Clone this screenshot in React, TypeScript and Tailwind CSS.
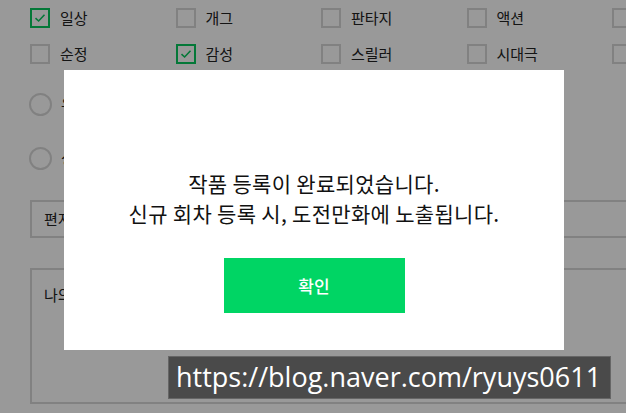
const genres = [
  [
    { label: "일상", checked: true },
    { label: "개그", checked: false },
    { label: "판타지", checked: false },
    { label: "액션", checked: false },
    { label: "", checked: false },
  ],
  [
    { label: "순정", checked: false },
    { label: "감성", checked: true },
    { label: "스릴러", checked: false },
    { label: "시대극", checked: false },
    { label: "", checked: false },
  ],
];

function CheckBox({ checked }: { checked: boolean }) {
  return (
    <span
      className={`w-[20px] h-[20px] shrink-0 border-2 flex items-center justify-center ${
        checked ? "border-[#07c85e]" : "border-[#d8d8d8]"
      }`}
    >
      {checked && (
        <svg width="12" height="10" viewBox="0 0 12 10" fill="none">
          <path d="M1.5 5.2 L4.6 8 L10.5 1.8" stroke="#07c85e" strokeWidth="1.6" />
        </svg>
      )}
    </span>
  );
}

export default function App() {
  return (
    <div
      className="relative w-[626px] h-[413px] overflow-hidden bg-white text-[#222]"
      style={{ fontFamily: '"Noto Sans CJK KR", "Noto Sans", sans-serif' }}
    >
      <div className="pl-[30px] pt-[8px] w-[680px]">
        <div className="flex flex-col gap-[16px]">
          {genres.map((row, i) => (
            <div key={i} className="flex">
              {row.map((g, j) => (
                <label key={j} className="w-[145.5px] shrink-0 flex items-center gap-[10px] text-[15px] leading-[20px]">
                  <CheckBox checked={g.checked} />
                  {g.label}
                </label>
              ))}
            </div>
          ))}
        </div>

        <div className="mt-[29px] flex flex-col gap-[31px]">
          {["유료", "성인"].map((t) => (
            <div key={t} className="flex items-center gap-[9px] text-[15px]">
              <span className="w-[23px] h-[23px] -ml-[1px] rounded-full border-2 border-[#d8d8d8]" />
              {t}
            </div>
          ))}
        </div>

        <div className="mt-[30px] h-[38px] border-2 border-[#d8d8d8] flex items-center px-[12px] text-[15px]">
          편지를
        </div>

        <div className="mt-[30px] h-[136px] border-2 border-[#d8d8d8] px-[12px] pt-[14px] text-[15px]">
          나의 작품 소개를 입력하세요
        </div>
      </div>

      <div className="absolute inset-0 bg-black/40" />

      <div className="absolute left-[64px] top-[70px] w-[500px] h-[280px] bg-white flex flex-col items-center pt-[98px]">
        <p className="text-[21px] leading-[30px] tracking-[0.3px] text-[#111] text-center">
          작품 등록이 완료되었습니다.
          <br />
          신규 회차 등록 시, 도전만화에 노출됩니다.
        </p>
        <button className="mt-[30px] w-[181px] h-[55px] bg-[#00d564] text-white text-[17px] font-medium">
          확인
        </button>
      </div>

      <div
        className="absolute left-[168px] top-[356px] w-[443px] h-[43px] bg-[#4a4a4a] border border-[#666] flex items-center pl-[7px] text-white text-[27px]"
        style={{ fontFamily: '"Open Sans", sans-serif' }}
      >
        https://blog.naver.com/ryuys0611
      </div>
    </div>
  );
}
